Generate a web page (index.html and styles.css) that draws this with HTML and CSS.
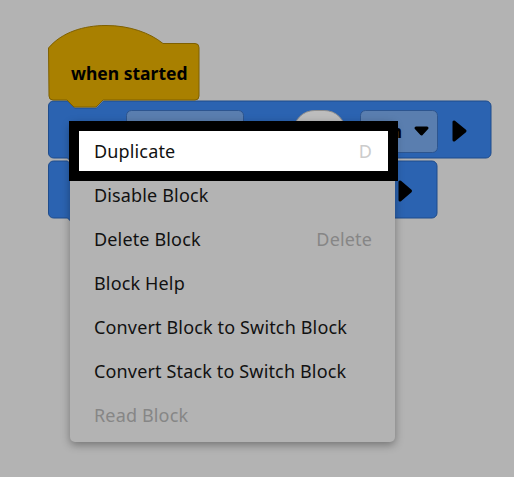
FILE: index.html
```html
<!DOCTYPE html>
<html lang="en">
<head>
    <meta charset="UTF-8">
    <meta name="viewport" content="width=device-width, initial-scale=1.0">
    <title>Workspace</title>
    <link rel="stylesheet" href="styles.css">
</head>
<body>
    <div class="workspace">
        <svg class="blocks" width="514" height="477" viewBox="0 0 514 477">
            <!-- second stack block -->
            <path class="block-blue" d="M48.5,166 a5,5 0 0 1 5,-5 h14 l7,7 h22 l7,-7 h328.5 a5,5 0 0 1 5,5 v47 a5,5 0 0 1 -5,5 h-328.5 l-7,7 h-22 l-7,-7 h-14 a5,5 0 0 1 -5,-5 z"/>
            <path class="arrow" d="M400,182 v18 l10.5,-9 z"/>

            <!-- first stack block -->
            <path class="block-blue" d="M48.5,106 a5,5 0 0 1 5,-5 h14 l7,7 h22 l7,-7 h382.5 a5,5 0 0 1 5,5 v47 a5,5 0 0 1 -5,5 h-382.5 l-7,7 h-22 l-7,-7 h-14 a5,5 0 0 1 -5,-5 z"/>
            <rect class="field" x="126.5" y="110.5" width="117" height="42" rx="5"/>
            <rect class="oval" x="293.5" y="110.5" width="52" height="42" rx="21"/>
            <rect class="field" x="360.5" y="110.5" width="77" height="42" rx="5"/>
            <text class="field-text" x="391" y="138">n</text>
            <path class="caret" d="M416,128 h11 l-5.5,6 z"/>
            <path class="arrow" d="M454,122 v18 l11,-9 z"/>

            <!-- hat block -->
            <path class="block-hat" d="M48.5,48 C62,32 84,25.5 106,25.5 C130,25.5 150,33 163,43.5 H195 a4,4 0 0 1 4,4 V96 a4,4 0 0 1 -4,4 h-92 l-7,7 h-22 l-7,-7 h-14 a4,4 0 0 1 -4,-4 z"/>
            <text class="hat-text" x="71" y="80">when started</text>
        </svg>

        <div class="context-menu">
            <div class="menu-item focused">
                <span>Duplicate</span>
                <span class="shortcut">D</span>
            </div>
            <div class="menu-item"><span>Disable Block</span></div>
            <div class="menu-item">
                <span>Delete Block</span>
                <span class="shortcut">Delete</span>
            </div>
            <div class="menu-item"><span>Block Help</span></div>
            <div class="menu-item"><span>Convert Block to Switch Block</span></div>
            <div class="menu-item"><span>Convert Stack to Switch Block</span></div>
            <div class="menu-item disabled"><span>Read Block</span></div>
        </div>
    </div>
</body>
</html>
```

FILE: styles.css
```css
body {
    margin: 0;
    background-color: #b3b3b3;
    font-family: "Noto Sans", "Open Sans", sans-serif;
    overflow: hidden;
}
.workspace {
    position: relative;
    width: 514px;
    height: 477px;
}
.blocks {
    display: block;
}
.block-blue {
    fill: #2b63b1;
    stroke: #1f4c8c;
    stroke-width: 1;
}
.block-hat {
    fill: #a98000;
    stroke: #7f6000;
    stroke-width: 1;
}
.hat-text {
    font-family: "Noto Sans", sans-serif;
    font-weight: bold;
    font-size: 17.5px;
    fill: #000;
}
.field {
    fill: #5a7eaf;
    stroke: #2d558f;
    stroke-width: 1;
}
.oval {
    fill: #bdbdbd;
    stroke: #8d8d8d;
    stroke-width: 1;
}
.field-text {
    font-family: "Noto Sans", sans-serif;
    font-weight: bold;
    font-size: 17px;
    fill: #000;
}
.caret, .arrow {
    fill: #000;
    stroke: #000;
    stroke-width: 3;
    stroke-linejoin: round;
}
.context-menu {
    position: absolute;
    left: 70px;
    top: 121px;
    width: 325px;
    padding: 6px 0 3px;
    box-sizing: border-box;
    background-color: #b3b3b3;
    border-radius: 5px;
    box-shadow: 0 3px 8px rgba(0, 0, 0, 0.35);
}
.menu-item {
    display: flex;
    justify-content: space-between;
    align-items: center;
    height: 40px;
    margin: 4px 7px 4px 9px;
    padding: 0 16px 0 15px;
    font-size: 18px;
    letter-spacing: 0.15px;
    color: #111;
}
.menu-item.focused {
    background-color: #fff;
    outline: 10px solid #000;
}
.shortcut {
    color: #868686;
}
.focused .shortcut {
    color: #cccccc;
}
.menu-item.disabled {
    color: #868686;
}
```
